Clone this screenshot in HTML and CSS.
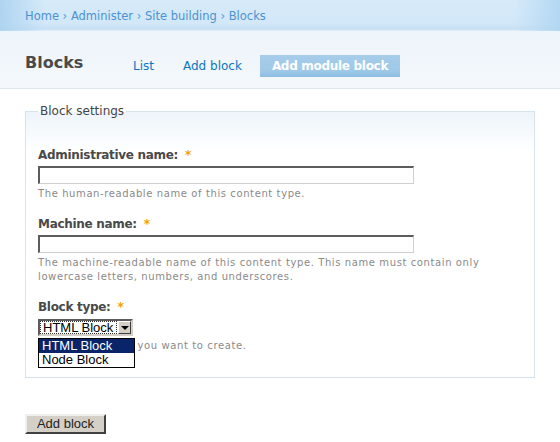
FILE: index.html
```html
<!DOCTYPE html>
<html>
<head>
<meta charset="utf-8">
<link rel="stylesheet" href="styles.css">
</head>
<body>
<div class="header">
  <nav class="crumbs"><a href="#">Home</a> › <a href="#">Administer</a> › <a href="#">Site building</a> › <a href="#">Blocks</a></nav>
</div>
<div class="titlebar">
  <h1 class="title">Blocks</h1>
  <ul class="tabs">
    <li class="tab"><a href="#">List</a></li>
    <li class="tab"><a href="#">Add block</a></li>
    <li class="tab active"><a href="#">Add module block</a></li>
  </ul>
</div>
<form class="content">
  <fieldset class="settings">
    <legend class="legend">Block settings</legend>
    <div class="item">
      <label class="label">Administrative name: <span class="req">*</span></label>
      <div class="text-input"></div>
      <div class="desc">The human-readable name of this content type.</div>
    </div>
    <div class="item">
      <label class="label">Machine name: <span class="req">*</span></label>
      <div class="text-input"></div>
      <div class="desc">The machine-readable name of this content type. This name must contain only<br>lowercase letters, numbers, and underscores.</div>
    </div>
    <div class="item select-item">
      <label class="label">Block type: <span class="req">*</span></label>
      <div class="select">
        <span class="select-value"><span class="focus">HTML Block</span></span>
        <span class="select-btn"><span class="arrow"></span></span>
      </div>
      <div class="desc desc-select">Choose the block you want to create.</div>
      <ul class="dropdown">
        <li class="option selected">HTML Block</li>
        <li class="option">Node Block</li>
      </ul>
    </div>
  </fieldset>
  <button type="button" class="submit">Add block</button>
</form>
</body>
</html>
```

FILE: styles.css
```css
html, body {
  margin: 0;
  padding: 0;
  background: #ffffff;
}
body {
  width: 560px;
  height: 442px;
  overflow: hidden;
  font-family: "DejaVu Sans", Verdana, sans-serif;
  color: #494949;
}
a {
  text-decoration: none;
}
.header {
  height: 31px;
  box-sizing: border-box;
  padding: 9px 25px 0;
  background:
    linear-gradient(to right, rgba(170, 210, 240, 0.9) 0, rgba(170, 210, 240, 0) 45px),
    linear-gradient(to left, rgba(175, 213, 242, 0.9) 0, rgba(175, 213, 242, 0) 45px),
    linear-gradient(to bottom, #d6eaf9 0, #d2e7f8 24px, #c6e0f4 29px, #e4f0fa 31px);
}
.crumbs {
  font-size: 11.5px;
  line-height: 15px;
  color: #5a9bd3;
  white-space: nowrap;
}
.crumbs a {
  color: #4c92d0;
}
.titlebar {
  display: flex;
  height: 57px;
  padding: 0 25px;
  border-bottom: 1px solid #dfe7ee;
  background: linear-gradient(to bottom, #edf4fa 0, #f4f8fc 100%);
}
.title {
  width: 96px;
  margin: 21px 0 0;
  font-size: 16px;
  line-height: 22px;
  font-weight: bold;
  color: #4a4a4a;
}
.tabs {
  display: flex;
  list-style: none;
  margin: 24px 0 0;
  padding: 0;
  height: 22px;
}
.tab {
  margin-right: 5px;
}
.tab:nth-child(2) {
  margin-right: 6px;
}
.tab a {
  display: block;
  padding: 0 12px;
  height: 22px;
  line-height: 22px;
  font-size: 12px;
  color: #0b76c4;
  white-space: nowrap;
}
.tab.active a {
  color: #ffffff;
  font-weight: bold;
  letter-spacing: -0.3px;
  background: linear-gradient(to bottom, #a6cdea 0, #9fc9e8 70%, #8dbde2 100%);
}
.content {
  padding: 14px 25px 0;
}
.settings {
  margin: 0;
  padding: 28px 12px 24px;
  border: 1px solid #d6e3ed;
  background: linear-gradient(to bottom, #edf4fa 0, #ffffff 40px);
  min-width: 0;
}
.legend {
  padding: 0 2px;
  margin-left: 0;
  font-size: 12px;
  line-height: 16px;
  color: #444;
}
.item {
  position: relative;
  margin-bottom: 15px;
}
.item:last-child {
  margin-bottom: 0;
}
.label {
  display: block;
  font-size: 12px;
  line-height: 16px;
  font-weight: bold;
  letter-spacing: -0.3px;
  color: #494949;
}
.req {
  color: #f0a000;
  font-weight: bold;
  margin-left: 3px;
}
.text-input {
  margin-top: 3px;
  width: 376px;
  height: 18px;
  box-sizing: border-box;
  background: #fff;
  border: 1px solid #cfcfcf;
  border-top: 2px solid #5c5c5c;
  border-left: 2px solid #5c5c5c;
}
.desc {
  margin-top: 3px;
  font-size: 10px;
  line-height: 14px;
  color: #8a8a8a;
  letter-spacing: 0.6px;
  white-space: nowrap;
}
.select {
  display: flex;
  margin-top: 4px;
  width: 95px;
  height: 17px;
  box-sizing: border-box;
  border: 2px solid #5c5c5c;
  border-right-color: #d4d0c8;
  border-bottom-color: #d4d0c8;
  background: #fff;
  font-family: "Liberation Sans", Arial, sans-serif;
  font-size: 13px;
  line-height: 13px;
  color: #000;
  white-space: nowrap;
}
.select-value {
  flex: 1;
  min-width: 0;
  padding: 0 1px 0 0;
}
.focus {
  display: block;
  border: 1px dotted #333;
  padding: 0 1px 0 2px;
  height: 11px;
  line-height: 11px;
  overflow: hidden;
}
.select-btn {
  flex: none;
  width: 13px;
  height: 13px;
  box-sizing: border-box;
  background: #d4d0c8;
  border-top: 1px solid #fff;
  border-left: 1px solid #fff;
  border-right: 1px solid #404040;
  border-bottom: 1px solid #404040;
  display: flex;
  align-items: center;
  justify-content: center;
}
.arrow {
  width: 0;
  height: 0;
  border-left: 4px solid transparent;
  border-right: 4px solid transparent;
  border-top: 4px solid #000;
}
.desc-select {
  margin-top: 3px;
}
.dropdown {
  position: absolute;
  left: 0;
  top: 39px;
  width: 97px;
  box-sizing: border-box;
  margin: 0;
  padding: 0;
  list-style: none;
  border: 1px solid #000;
  background: #fff;
  font-family: "Liberation Sans", Arial, sans-serif;
  font-size: 13px;
  color: #000;
  white-space: nowrap;
}
.option {
  height: 14px;
  line-height: 14px;
  padding: 0 3px;
}
.option.selected {
  background: #0a246a;
  color: #fff;
}
.submit {
  display: block;
  margin: 36px 0 0;
  width: 81px;
  height: 20px;
  padding: 0;
  background: #d4d0c8;
  border: 2px solid;
  border-color: #f0efeb #404040 #404040 #f0efeb;
  font-family: "Liberation Sans", Arial, sans-serif;
  font-size: 13px;
  line-height: 16px;
  color: #222;
}
```
